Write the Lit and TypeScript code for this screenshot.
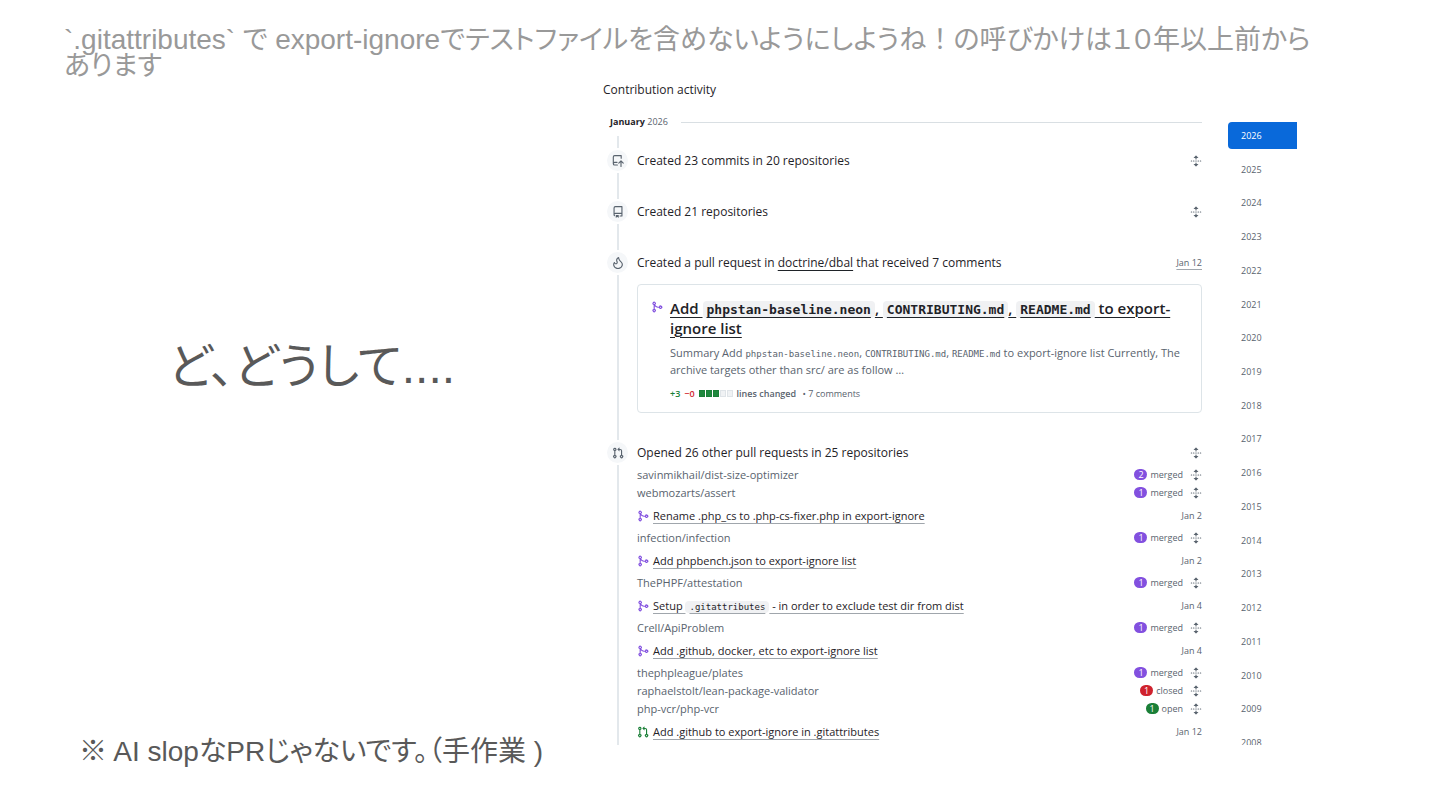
import { LitElement, html, css, svg } from "lit";
import { customElement, property } from "lit/decorators.js";
import { classMap } from "lit/directives/class-map.js";

const ICONS: Record<string, string> = {
  merge:
    "M5.45 5.154A4.25 4.25 0 0 0 9.25 7.5h1.378a2.251 2.251 0 1 1 0 1.5H9.25A5.734 5.734 0 0 1 5 7.123v3.505a2.25 2.25 0 1 1-1.5 0V5.372a2.25 2.25 0 1 1 1.95-.218ZM4.25 13.5a.75.75 0 1 0 0-1.5.75.75 0 0 0 0 1.5Zm8.5-4.5a.75.75 0 1 0 0-1.5.75.75 0 0 0 0 1.5ZM5 3.25a.75.75 0 1 0 0 .005V3.25Z",
  pull: "M1.5 3.25a2.25 2.25 0 1 1 3 2.122v5.256a2.251 2.251 0 1 1-1.5 0V5.372A2.25 2.25 0 0 1 1.5 3.25Zm5.677-.177L9.573.677A.25.25 0 0 1 10 .854V2.5h1A2.5 2.5 0 0 1 13.5 5v5.628a2.251 2.251 0 1 1-1.5 0V5a1 1 0 0 0-1-1h-1v1.646a.25.25 0 0 1-.427.177L7.177 3.427a.25.25 0 0 1 0-.354ZM3.75 2.5a.75.75 0 1 0 0 1.5.75.75 0 0 0 0-1.5Zm0 9.5a.75.75 0 1 0 0 1.5.75.75 0 0 0 0-1.5Zm8.25.75a.75.75 0 1 0 1.5 0 .75.75 0 0 0-1.5 0Z",
  repo: "M2 2.5A2.5 2.5 0 0 1 4.5 0h8.75a.75.75 0 0 1 .75.75v12.5a.75.75 0 0 1-.75.75h-2.5a.75.75 0 0 1 0-1.5h1.75v-2h-8a1 1 0 0 0-.714 1.7.75.75 0 1 1-1.072 1.05A2.495 2.495 0 0 1 2 11.5Zm10.5-1h-8a1 1 0 0 0-1 1v6.708A2.486 2.486 0 0 1 4.5 9h8ZM5 12.25a.25.25 0 0 1 .25-.25h3.5a.25.25 0 0 1 .25.25v3.25a.25.25 0 0 1-.4.2l-1.45-1.087a.249.249 0 0 0-.3 0L5.4 15.7a.25.25 0 0 1-.4-.2Z",
  push: "M1 2.5A2.5 2.5 0 0 1 3.5 0h8.75a.75.75 0 0 1 .75.75v3.5a.75.75 0 0 1-1.5 0V1.5h-8a1 1 0 0 0-1 1v6.708A2.493 2.493 0 0 1 3.5 9h3.25a.75.75 0 0 1 0 1.5H3.5a1 1 0 0 0 0 2h3.75a.75.75 0 0 1 0 1.5H3.5A2.5 2.5 0 0 1 1 11.5ZM11.25 15.25V9.56L9.53 11.28a.75.75 0 0 1-1.06-1.06l3-3a.75.75 0 0 1 1.06 0l3 3a.75.75 0 0 1-1.06 1.06L12.75 9.56v5.69a.75.75 0 0 1-1.5 0Z",
  flame:
    "M9.533.753V.752c.217 2.385 1.463 3.626 2.653 4.81C13.37 6.74 14.498 7.863 14.498 10c0 3.5-3 6-6.5 6S1.5 13.512 1.5 10c0-1.298.536-2.56 1.425-3.286.376-.308.862 0 1.035.454C4.46 8.487 5.581 8.419 6 8c.282-.282.341-.811-.003-1.5C4.34 3.187 7.035.75 8.77.146c.39-.137.726.194.763.607ZM7.998 14.5c2.832 0 5-1.98 5-4.5 0-1.463-.68-2.19-1.879-3.383l-.036-.037c-1.013-1.008-2.3-2.29-2.834-4.434-.322.256-.63.579-.864.953-.432.696-.621 1.58-.046 2.73.473.947.67 2.284-.278 3.232-.61.61-1.545.84-2.403.633a2.79 2.79 0 0 1-1.436-.874A3.198 3.198 0 0 0 3 10c0 2.53 2.164 4.5 4.998 4.5Z",
  unfold:
    "m8.177.677 2.896 2.896a.25.25 0 0 1-.177.427H8.75v1.25a.75.75 0 0 1-1.5 0V4H5.104a.25.25 0 0 1-.177-.427L7.823.677a.25.25 0 0 1 .354 0ZM7.25 10.75a.75.75 0 0 1 1.5 0V12h2.146a.25.25 0 0 1 .177.427l-2.896 2.896a.25.25 0 0 1-.354 0l-2.896-2.896A.25.25 0 0 1 5.104 12H7.25v-1.25Zm-5-2a.75.75 0 0 0 0-1.5h-.5a.75.75 0 0 0 0 1.5h.5ZM6 8a.75.75 0 0 1-.75.75h-.5a.75.75 0 0 1 0-1.5h.5A.75.75 0 0 1 6 8Zm2.25.75a.75.75 0 0 0 0-1.5h-.5a.75.75 0 0 0 0 1.5h.5ZM12 8a.75.75 0 0 1-.75.75h-.5a.75.75 0 0 1 0-1.5h.5A.75.75 0 0 1 12 8Zm2.25.75a.75.75 0 0 0 0-1.5h-.5a.75.75 0 0 0 0 1.5h.5Z",
};

const icon = (name: string) => html`<svg class="icon" viewBox="0 0 16 16" aria-hidden="true">
  ${svg`<path d=${ICONS[name]}></path>`}
</svg>`;

const unfold = (label: string) =>
  html`<button class="unfold" type="button" aria-label=${label}>${icon("unfold")}</button>`;

type PullState = "merged" | "closed" | "open";

interface Pull {
  state: PullState;
  title: unknown;
  date: string;
}

interface Repo {
  name: string;
  count: number;
  state: PullState;
  pull?: Pull;
}

const REPOS: Repo[] = [
  { name: "savinmikhail/dist-size-optimizer", count: 2, state: "merged" },
  {
    name: "webmozarts/assert",
    count: 1,
    state: "merged",
    pull: { state: "merged", title: "Rename .php_cs to .php-cs-fixer.php in export-ignore", date: "Jan 2" },
  },
  {
    name: "infection/infection",
    count: 1,
    state: "merged",
    pull: { state: "merged", title: "Add phpbench.json to export-ignore list", date: "Jan 2" },
  },
  {
    name: "ThePHPF/attestation",
    count: 1,
    state: "merged",
    pull: {
      state: "merged",
      title: html`Setup <code>.gitattributes</code> - in order to exclude test dir from dist`,
      date: "Jan 4",
    },
  },
  {
    name: "Crell/ApiProblem",
    count: 1,
    state: "merged",
    pull: { state: "merged", title: "Add .github, docker, etc to export-ignore list", date: "Jan 4" },
  },
  { name: "thephpleague/plates", count: 1, state: "merged" },
  { name: "raphaelstolt/lean-package-validator", count: 1, state: "closed" },
  {
    name: "php-vcr/php-vcr",
    count: 1,
    state: "open",
    pull: { state: "open", title: "Add .github to export-ignore in .gitattributes", date: "Jan 12" },
  },
];

const YEARS = Array.from({ length: 19 }, (_, i) => 2026 - i);

@customElement("contribution-activity")
export class ContributionActivity extends LitElement {
  @property({ type: Number }) year = 2026;

  static styles = css`
    :host {
      display: flex;
      align-items: stretch;
      gap: 26px;
      overflow: hidden;
      color: #1f2328;
      font-family: "Open Sans", "Noto Sans", sans-serif;
      font-size: 12px;
    }
    .feed {
      flex: 1;
      min-width: 0;
    }
    h2,
    h3,
    h4,
    p,
    ul {
      margin: 0;
      padding: 0;
      font-weight: 400;
      list-style: none;
    }
    h2 {
      font-size: 12px;
      line-height: 20px;
    }
    .month {
      display: flex;
      align-items: center;
      gap: 13px;
      margin: 12px 0 4px 7px;
      color: #59636e;
      font-size: 9px;
      line-height: 20px;
      white-space: nowrap;
    }
    .month::after {
      content: "";
      flex: 1;
      height: 1px;
      background: #d9dfe3;
    }
    .month b {
      color: #1f2328;
      font-weight: 700;
    }
    .stub {
      width: 2px;
      height: 12px;
      margin-left: 14px;
      background: #e3e8ec;
    }
    .item {
      display: flex;
      gap: 7px;
      min-height: 51px;
      padding-left: 2px;
    }
    .rail {
      display: flex;
      flex-direction: column;
      align-items: center;
      width: 25px;
    }
    .rail::after {
      content: "";
      flex: 1;
      width: 2px;
      background: #e3e8ec;
    }
    .badge {
      display: flex;
      align-items: center;
      justify-content: center;
      width: 21px;
      height: 21px;
      margin: 2px;
      border-radius: 50%;
      background: #f5f7f9;
      color: #59636e;
    }
    .content {
      flex: 1;
      min-width: 0;
    }
    .icon {
      display: block;
      flex: none;
      width: 12px;
      height: 12px;
      fill: currentColor;
    }
    .row {
      display: flex;
      align-items: center;
      justify-content: space-between;
      gap: 7px;
      line-height: 25px;
      white-space: nowrap;
    }
    h3 {
      font-size: 12px;
    }
    a {
      color: inherit;
      text-decoration: none;
    }
    h3 a {
      text-decoration: underline;
      text-underline-offset: 3px;
      text-decoration-thickness: 1px;
    }
    .unfold {
      display: block;
      padding: 0;
      border: 0;
      background: none;
      color: #59636e;
    }
    .date {
      color: #59636e;
      font-size: 9px;
    }
    a.date {
      text-decoration: underline;
      text-underline-offset: 3px;
      text-decoration-thickness: 1px;
      text-decoration-color: #a0a6ac;
    }
    .card {
      display: flex;
      gap: 7px;
      margin: 9px 0 27px;
      padding: 13px 13px 11px;
      border: 1px solid #dde4e8;
      border-radius: 4px;
    }
    .card > .icon {
      margin-top: 3px;
    }
    .merged {
      color: #8250df;
    }
    .open {
      color: #1a7f37;
    }
    code {
      font-family: "DejaVu Sans Mono", monospace;
      line-height: 1;
    }
    h4 {
      font-size: 15px;
      font-weight: 600;
      line-height: 20px;
    }
    h4 a,
    .pull a {
      text-decoration: underline;
      text-underline-offset: 3px;
      text-decoration-thickness: 1px;
    }
    h4 code {
      padding: 1px 4px;
      border-radius: 4px;
      background: #f0f1f3;
      font-size: 13px;
      font-weight: 700;
    }
    .summary {
      margin: 6px 0 8px;
      color: #59636e;
      font-size: 11px;
      line-height: 17px;
    }
    .summary code {
      font-size: 9px;
    }
    .stats {
      display: flex;
      align-items: center;
      gap: 4px;
      color: #59636e;
      font-size: 9px;
      line-height: 15px;
      white-space: nowrap;
    }
    .stats b {
      font-weight: 600;
    }
    .stats .added {
      color: #1a7f37;
    }
    .stats .removed {
      color: #d1242f;
    }
    .blocks {
      display: flex;
      gap: 1px;
    }
    .block {
      box-sizing: border-box;
      width: 6px;
      height: 7px;
      border: 1px solid #dfe4e8;
      background: #f0f2f4;
    }
    .block.on {
      border-color: #1a7f37;
      background: #1f883d;
    }
    .repos {
      padding-top: 1px;
    }
    .repo {
      color: #59636e;
      font-size: 11px;
      line-height: 18px;
    }
    .status {
      display: flex;
      align-items: center;
      gap: 3px;
      font-size: 9px;
    }
    .count {
      width: 13px;
      margin-bottom: 1px;
      border-radius: 6px;
      color: #fff;
      font-size: 9px;
      line-height: 11px;
      text-align: center;
    }
    .count.merged {
      background: #8250df;
    }
    .count.closed {
      background: #cf222e;
    }
    .count.open {
      background: #1a7f37;
    }
    .count.merged,
    .count.open {
      color: #fff;
    }
    .status .unfold {
      margin-left: 4px;
    }
    .pull {
      font-size: 11px;
      line-height: 27px;
    }
    .pull-title {
      display: flex;
      align-items: center;
      gap: 4px;
    }
    .pull a {
      color: #1f2328;
      text-decoration-color: #a0a6ac;
    }
    .pull code {
      padding: 1px 4px;
      border-radius: 4px;
      background: #f0f1f3;
      font-size: 9px;
    }
    .years {
      display: flex;
      flex-direction: column;
      justify-content: space-between;
      width: 69px;
      margin: 42px 0 -11px;
    }
    .year {
      padding-left: 13px;
      border-radius: 4px 0 0 4px;
      color: #59636e;
      font-size: 9px;
      line-height: 27px;
    }
    .year.current {
      background: #0969da;
      color: #fff;
    }
  `;

  private item(name: string, heading: unknown, aside: unknown, body: unknown = "") {
    return html`<section class="item">
      <div class="rail"><span class="badge">${icon(name)}</span></div>
      <div class="content">
        <div class="row">
          <h3>${heading}</h3>
          ${aside}
        </div>
        ${body}
      </div>
    </section>`;
  }

  private repo(r: Repo) {
    return html`<li>
      <div class="row repo">
        <a href="#${r.name}">${r.name}</a>
        <span class="status">
          <span class="count ${r.state}">${r.count}</span>${r.state} ${unfold(`Expand ${r.name}`)}
        </span>
      </div>
      ${r.pull
        ? html`<div class="row pull">
            <span class="pull-title">
              <span class=${r.pull.state}>${icon(r.pull.state === "open" ? "pull" : "merge")}</span>
              <a href="#pull">${r.pull.title}</a>
            </span>
            <span class="date">${r.pull.date}</span>
          </div>`
        : ""}
    </li>`;
  }

  private card() {
    return html`<article class="card">
      <svg class="icon merged" viewBox="0 0 16 16" aria-hidden="true"><path d=${ICONS.merge}></path></svg>
      <div>
        <h4>
          <a href="#pull"
            >Add <code>phpstan-baseline.neon</code>, <code>CONTRIBUTING.md</code>, <code>README.md</code> to
            export-ignore list</a
          >
        </h4>
        <p class="summary">
          Summary Add <code>phpstan-baseline.neon</code>, <code>CONTRIBUTING.md</code>, <code>README.md</code> to
          export-ignore list Currently, The archive targets other than src/ are as follow …
        </p>
        <div class="stats">
          <b class="added">+3</b><b class="removed">−0</b>
          <span class="blocks">
            ${[1, 1, 1, 0, 0].map((on) => html`<i class=${classMap({ block: true, on: !!on })}></i>`)}
          </span>
          <b>lines changed</b>
          <span>&nbsp;• 7 comments</span>
        </div>
      </div>
    </article>`;
  }

  render() {
    return html`
      <div class="feed">
        <h2>Contribution activity</h2>
        <h3 class="month"><span><b>January</b> ${this.year}</span></h3>
        <div class="stub"></div>
        ${this.item("push", "Created 23 commits in 20 repositories", unfold("Expand commits"))}
        ${this.item("repo", "Created 21 repositories", unfold("Expand repositories"))}
        ${this.item(
          "flame",
          html`Created a pull request in <a href="#dbal">doctrine/dbal</a> that received 7 comments`,
          html`<a class="date" href="#jan12">Jan 12</a>`,
          this.card(),
        )}
        ${this.item(
          "pull",
          "Opened 26 other pull requests in 25 repositories",
          unfold("Expand pull requests"),
          html`<ul class="repos">
            ${REPOS.map((r) => this.repo(r))}
          </ul>`,
        )}
      </div>
      <nav class="years" aria-label="Years">
        ${YEARS.map(
          (y) => html`<a class=${classMap({ year: true, current: y === this.year })} href="#${y}">${y}</a>`,
        )}
      </nav>
    `;
  }
}

@customElement("app-root")
export class AppRoot extends LitElement {
  static styles = css`
    :host {
      display: block;
      background: #fff;
      color: #595959;
      font-family: "Liberation Sans", "Noto Sans CJK JP", sans-serif;
      font-feature-settings: "palt";
    }
    .slide {
      display: flex;
      flex-direction: column;
      box-sizing: border-box;
      min-height: 100vh;
      padding: 27px 64px 38px;
    }
    h1,
    p {
      margin: 0;
      font-weight: 400;
    }
    h1 {
      padding: 0 52px 1px 0;
      color: #999;
      font-size: 27px;
      line-height: 26px;
    }
    .latin {
      font-size: 28px;
      line-height: 24px;
    }
    .full {
      font-feature-settings: normal;
    }
    .columns {
      display: grid;
      flex: 1;
      grid-template-columns: minmax(0, 539fr) minmax(0, 694fr) minmax(0, 79fr);
      align-items: start;
    }
    .remarks {
      display: flex;
      flex-direction: column;
      align-self: stretch;
    }
    .why {
      margin: auto 0;
      padding: 0 40px 78px 104px;
      font-size: 48px;
      line-height: 60px;
    }
    .note {
      padding-left: 15px;
      font-size: 28px;
      line-height: 40px;
      white-space: nowrap;
    }
  `;

  render() {
    return html`
      <main class="slide" lang="ja">
        <h1>
          <span class="latin">\`.gitattributes\`</span> で
          <span class="latin">export-ignore</span>でテストファイルを含めないようにしようね<span class="full">！</span
          >の呼びかけは１０年以上前からあります
        </h1>
        <div class="columns">
          <div class="remarks">
            <p class="why">ど、どうして....</p>
            <p class="note">※ AI slopなPRじゃないです。（手作業 )</p>
          </div>
          <contribution-activity lang="en"></contribution-activity>
        </div>
      </main>
    `;
  }
}
